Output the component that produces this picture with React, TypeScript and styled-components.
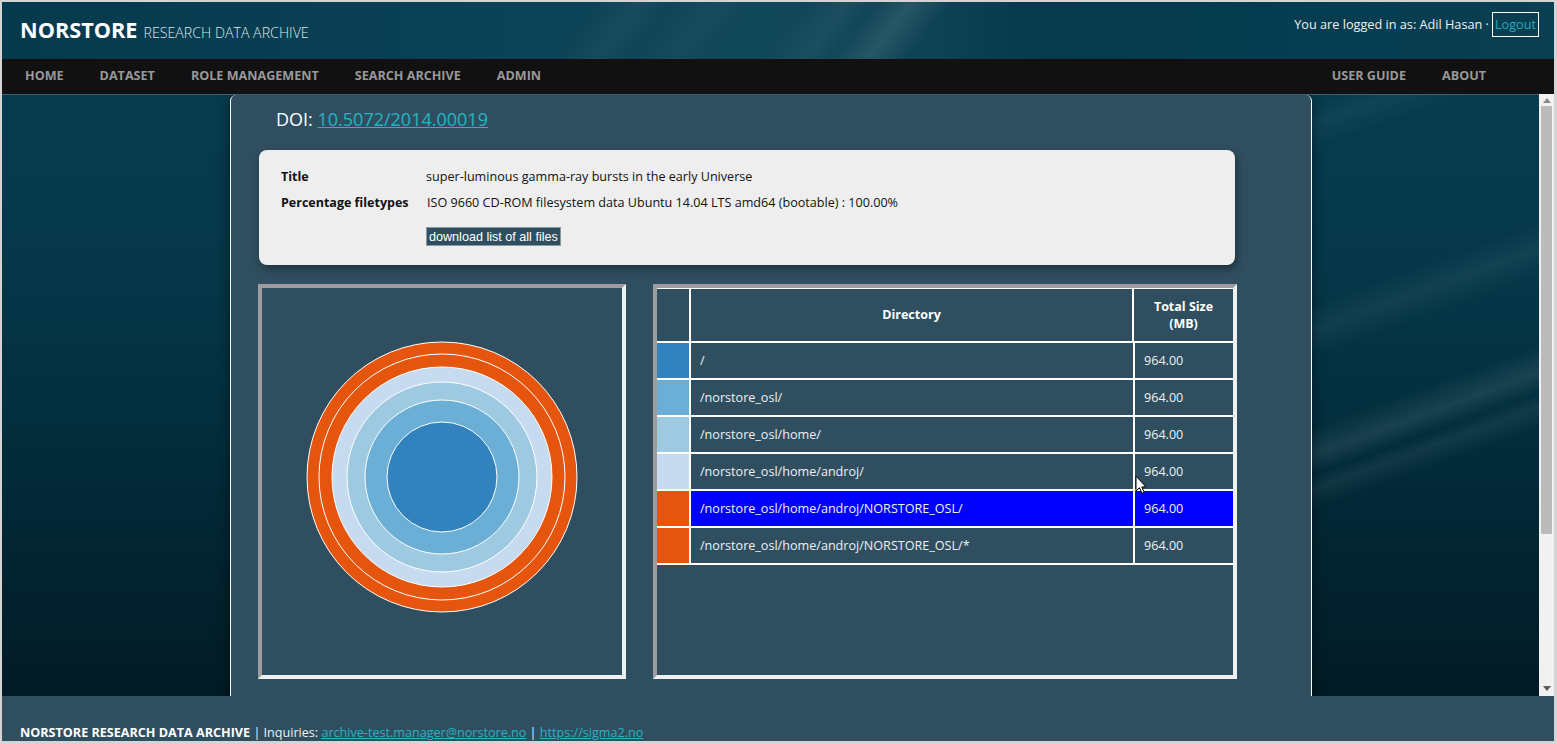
import React from "react";
import styled, { createGlobalStyle } from "styled-components";

const rows = [
  { color: "#3182bd", path: "/", size: "964.00" },
  { color: "#6baed6", path: "/norstore_osl/", size: "964.00" },
  { color: "#9ecae1", path: "/norstore_osl/home/", size: "964.00" },
  { color: "#c6dbef", path: "/norstore_osl/home/androj/", size: "964.00" },
  { color: "#e6550d", path: "/norstore_osl/home/androj/NORSTORE_OSL/", size: "964.00", active: true },
  { color: "#e6550d", path: "/norstore_osl/home/androj/NORSTORE_OSL/*", size: "964.00" },
];

const rings = [
  { r: 135, color: "#e6550d" },
  { r: 123, color: "#e6550d" },
  { r: 110, color: "#c6dbef" },
  { r: 95, color: "#9ecae1" },
  { r: 77, color: "#6baed6" },
  { r: 55, color: "#3182bd" },
];

const App = () => {
  return (
    <Frame>
      <GlobalStyle />
      <Header>
        <Brand>
          <BrandName>NORSTORE</BrandName>
          <BrandSub>RESEARCH DATA ARCHIVE</BrandSub>
        </Brand>
        <LoginInfo>
          You are logged in as: Adil Hasan ·
          <LogoutLink href="#">Logout</LogoutLink>
        </LoginInfo>
      </Header>
      <Nav>
        <NavGroup>
          <NavItem>Home</NavItem>
          <NavItem>Dataset</NavItem>
          <NavItem>Role management</NavItem>
          <NavItem>Search archive</NavItem>
          <NavItem>Admin</NavItem>
        </NavGroup>
        <NavGroup>
          <NavItem>User guide</NavItem>
          <NavItem>About</NavItem>
        </NavGroup>
      </Nav>
      <Main>
        <Scroller>
          <Card>
            <Doi>
              DOI: <DoiLink href="#">10.5072/2014.00019</DoiLink>
            </Doi>
            <InfoBox>
              <InfoRow>
                <InfoLabel>Title</InfoLabel>
                <span>super-luminous gamma-ray bursts in the early Universe</span>
              </InfoRow>
              <InfoRow>
                <InfoLabel>Percentage filetypes</InfoLabel>
                <InfoValue>ISO 9660 CD-ROM filesystem data Ubuntu 14.04 LTS amd64 (bootable) : 100.00%</InfoValue>
              </InfoRow>
              <DownloadButton>download list of all files</DownloadButton>
            </InfoBox>
            <Panels>
              <ChartPanel>
                <svg width="272" height="272" viewBox="-136 -136 272 272">
                  {rings.map((ring) => (
                    <circle key={ring.r} r={ring.r} fill={ring.color} stroke="#fff" strokeWidth="1" />
                  ))}
                </svg>
              </ChartPanel>
              <TablePanel>
                <HeadTable>
                  <thead>
                    <tr>
                      <HeadCell $width={33} />
                      <HeadCell>Directory</HeadCell>
                      <HeadCell $width={100}>
                        Total Size
                        <br />
                        (MB)
                      </HeadCell>
                    </tr>
                  </thead>
                </HeadTable>
                <BodyTable>
                  <tbody>
                    {rows.map((row) => (
                      <tr key={row.path}>
                        <SwatchCell $color={row.color} />
                        <BodyCell $active={row.active}>{row.path}</BodyCell>
                        <SizeCell $active={row.active}>{row.size}</SizeCell>
                      </tr>
                    ))}
                  </tbody>
                </BodyTable>
              </TablePanel>
            </Panels>
          </Card>
        </Scroller>
        <ScrollBar>
          <ArrowUp />
          <Thumb />
          <ArrowDown />
        </ScrollBar>
      </Main>
      <Footer>
        <FooterLine>
          <strong>NORSTORE RESEARCH DATA ARCHIVE</strong> | Inquiries:{" "}
          <FooterLink href="#">archive-test.manager@norstore.no</FooterLink> |{" "}
          <FooterLink href="#">https://sigma2.no</FooterLink>
        </FooterLine>
      </Footer>
      <Cursor width="12" height="19" viewBox="0 0 12 19">
        <path d="M1 1v15l3.5-3.2 2.4 5.4 2.3-1-2.4-5.3H11z" fill="#fff" stroke="#000" strokeWidth="1" />
      </Cursor>
    </Frame>
  );
};

const GlobalStyle = createGlobalStyle`
  html, body {
    margin: 0;
    height: 100%;
    overflow: hidden;
    font-family: "Open Sans", sans-serif;
  }
  * {
    box-sizing: border-box;
  }
`;

const Frame = styled.div`
  position: relative;
  display: flex;
  flex-direction: column;
  width: 1557px;
  height: 744px;
  border-style: solid;
  border-color: #d4d4d4;
  border-width: 2px 3px 3px 2px;
  background: #2f4f60;
`;

const Header = styled.header`
  display: flex;
  justify-content: space-between;
  flex: none;
  height: 57px;
  background:
    linear-gradient(128deg, transparent 54.5%, rgba(255, 255, 255, 0.1) 57%, transparent 59.5%),
    linear-gradient(128deg, transparent 50.5%, rgba(255, 255, 255, 0.05) 53%, transparent 55%),
    linear-gradient(128deg, transparent 42%, rgba(255, 255, 255, 0.03) 45%, transparent 47%),
    linear-gradient(128deg, transparent 37.5%, rgba(255, 255, 255, 0.04) 40%, transparent 42%),
    linear-gradient(90deg, #053a4d 0%, #0a4054 25%, #104759 50%, #0e4254 60%, #063a4c 66%, #053c4f 80%, #0a3f52 100%);
`;

const Brand = styled.div`
  display: flex;
  align-items: baseline;
  gap: 6px;
  padding: 13px 0 0 18px;
  color: #fff;
`;

const BrandName = styled.span`
  font-size: 21.7px;
  font-weight: 700;
  line-height: 30px;
`;

const BrandSub = styled.span`
  font-size: 14.2px;
  font-weight: 300;
  color: #dfe6ea;
`;

const LoginInfo = styled.div`
  display: flex;
  align-items: flex-start;
  height: 25px;
  margin: 10px 15px 0 0;
  font-size: 12.7px;
  line-height: 24px;
  color: #f0f0f0;
`;

const LogoutLink = styled.a`
  display: block;
  height: 25px;
  margin-left: 3px;
  padding: 0 2px;
  border: 1px solid #fff;
  line-height: 22px;
  color: #26a9b8;
  text-decoration: none;
`;

const Nav = styled.nav`
  display: flex;
  justify-content: space-between;
  flex: none;
  height: 35px;
  padding: 0 68px 2px 23px;
  background: #111;
`;

const NavGroup = styled.div`
  display: flex;
  align-items: center;
  gap: 36px;
`;

const NavItem = styled.span`
  font-size: 12.6px;
  font-weight: 700;
  text-transform: uppercase;
  color: #999;
`;

const Main = styled.main`
  display: flex;
  flex: none;
  height: 602px;
`;

const Scroller = styled.div`
  flex: 1;
  display: flex;
  overflow: hidden;
  padding-left: 228px;
  border-top: 1px solid #3d6170;
  background:
    linear-gradient(160deg, transparent 2%, rgba(255, 255, 255, 0.04) 5%, transparent 9%) right top / 240px 100% no-repeat,
    linear-gradient(160deg, transparent 31%, rgba(255, 255, 255, 0.05) 35%, transparent 39%) right top / 240px 100% no-repeat,
    linear-gradient(160deg, transparent 49%, rgba(255, 255, 255, 0.09) 53%, transparent 56%) right top / 240px 100% no-repeat,
    linear-gradient(160deg, transparent 56%, rgba(255, 255, 255, 0.06) 58%, transparent 61%) right top / 240px 100% no-repeat,
    linear-gradient(180deg, #063c4e 0%, #053749 30%, #032e3d 55%, #02232f 80%, #021b26 100%);
`;

const Card = styled.section`
  flex: none;
  width: 1082px;
  height: 640px;
  padding: 0 0 0 28px;
  border-left: 1px solid #fff;
  border-right: 1px solid #fff;
  border-radius: 6px 6px 0 0;
  background: #2f4f60;
  box-shadow: 0 0 14px rgba(0, 0, 0, 0.45);
`;

const Doi = styled.div`
  padding: 11px 0 0 17px;
  font-size: 18px;
  line-height: 26px;
  color: #fff;
`;

const DoiLink = styled.a`
  color: #26b3c2;
`;

const InfoBox = styled.div`
  display: flex;
  flex-direction: column;
  width: 976px;
  height: 115px;
  margin-top: 18px;
  padding: 13px 22px 0;
  border-radius: 8px;
  background: #eee;
  box-shadow: 2px 4px 8px rgba(0, 0, 0, 0.4);
  font-size: 12.6px;
  color: #111;
`;

const InfoRow = styled.div`
  display: flex;
  height: 26px;
  align-items: center;
`;

const InfoLabel = styled.span`
  flex: none;
  width: 145px;
  font-size: 12.5px;
  font-weight: 700;
`;

const InfoValue = styled.span`
  margin-left: 1px;
`;

const DownloadButton = styled.button`
  align-self: flex-start;
  height: 19px;
  margin: 12px 0 0 145px;
  padding: 0 2px;
  border: 1px solid #8a9aa2;
  background: #2f4f60;
  font-family: "Liberation Sans", sans-serif;
  font-size: 12.6px;
  color: #fff;
`;

const Panels = styled.div`
  display: flex;
  gap: 27px;
  margin: 19px 0 0 -1px;
`;

const bevel = `
  border-style: solid;
  border-width: 4px;
  border-color: #9d9d9d #eef0f2 #eef0f2 #9d9d9d;
`;

const ChartPanel = styled.div`
  ${bevel}
  display: flex;
  align-items: center;
  justify-content: center;
  flex: none;
  width: 368px;
  height: 395px;
  padding-bottom: 9px;
`;

const TablePanel = styled.div`
  ${bevel}
  flex: none;
  width: 584px;
  height: 395px;
`;

const HeadTable = styled.table`
  width: 576px;
  height: 53px;
  border-collapse: collapse;
  table-layout: fixed;
  border-top: 1px solid #fff;
`;

const HeadCell = styled.th<{ $width?: number }>`
  width: ${(p) => (p.$width ? `${p.$width}px` : "auto")};
  padding: 0 0 1px;
  border-left: 2px solid #fff;
  font-size: 12.5px;
  line-height: 17px;
  font-weight: 700;
  color: #fff;

  &:first-child {
    border-left: 0;
  }
`;

const BodyTable = styled.table`
  width: 576px;
  border-collapse: collapse;
  table-layout: fixed;
  border-top: 2px solid #fff;
`;

const SwatchCell = styled.td<{ $color: string }>`
  width: 33px;
  height: 37px;
  padding: 0;
  border-bottom: 2px solid #fff;
  background: ${(p) => p.$color};
`;

const BodyCell = styled.td<{ $active?: boolean }>`
  height: 37px;
  padding: 0 0 0 9px;
  border-left: 2px solid #fff;
  border-bottom: 2px solid #fff;
  background: ${(p) => (p.$active ? "#0000ff" : "transparent")};
  font-size: 12.6px;
  color: #f0f0f0;
`;

const SizeCell = styled(BodyCell)`
  width: 99px;
`;

const ScrollBar = styled.div`
  display: flex;
  flex-direction: column;
  align-items: center;
  flex: none;
  width: 15px;
  background: #f1f1f1;
`;

const ArrowUp = styled.div`
  flex: none;
  width: 0;
  height: 0;
  margin: 4px 0 3px;
  border: 4px solid transparent;
  border-top: 0;
  border-bottom: 5px solid #8a8a8a;
`;

const Thumb = styled.div`
  flex: none;
  width: 11px;
  height: 428px;
  background: #bbb;
`;

const ArrowDown = styled.div`
  width: 0;
  height: 0;
  margin: auto 0 5px;
  border: 4px solid transparent;
  border-bottom: 0;
  border-top: 5px solid #5a5a5a;
`;

const Footer = styled.footer`
  flex: 1;
  display: flex;
  align-items: flex-end;
  padding: 0 0 0 18px;
  background: #2f4f60;
  overflow: hidden;
`;

const FooterLine = styled.div`
  font-size: 12.6px;
  line-height: 16px;
  color: #f0f0f0;

  strong {
    color: #fff;
  }
`;

const FooterLink = styled.a`
  color: #26b3c2;
`;

const Cursor = styled.svg`
  position: absolute;
  left: 1133px;
  top: 473px;
`;

export default App;
